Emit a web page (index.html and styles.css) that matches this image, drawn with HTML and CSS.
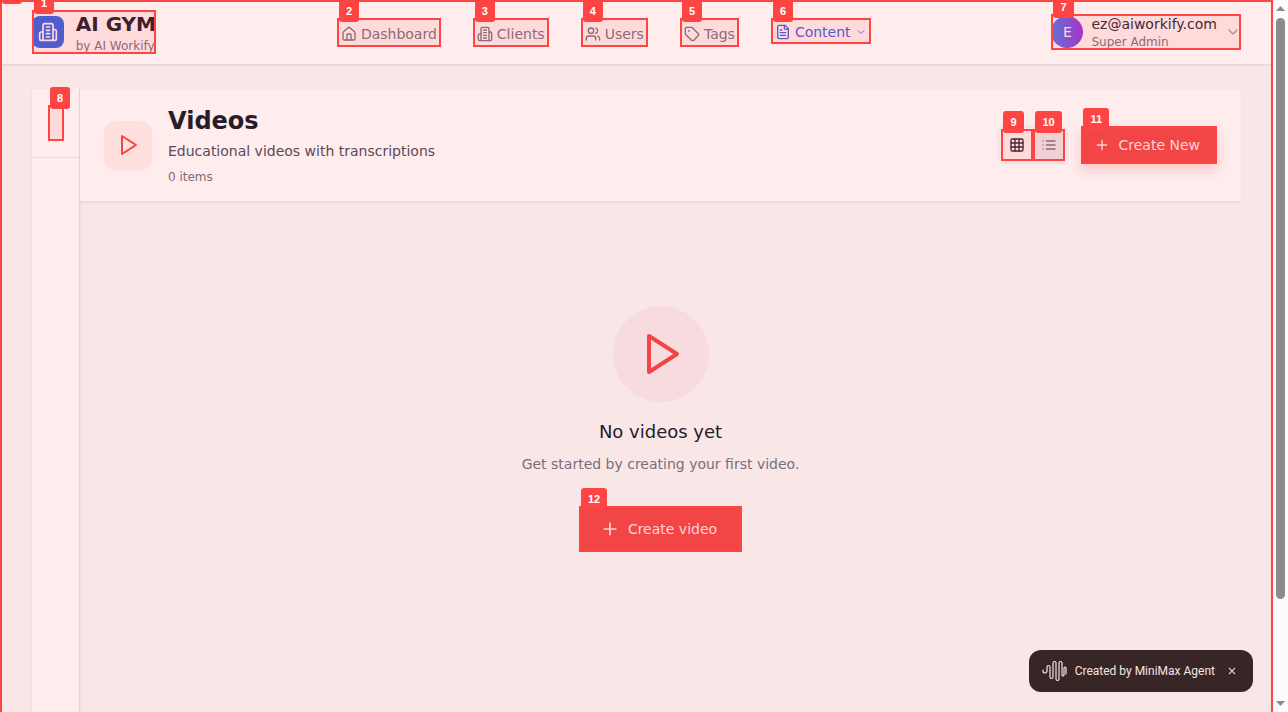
FILE: index.html
```html
<!DOCTYPE html>
<html lang="en">
<head>
<meta charset="utf-8">
<title>AI GYM - Videos</title>
<link rel="stylesheet" href="styles.css">
</head>
<body>
<svg class="sprite" aria-hidden="true">
  <symbol id="building" viewBox="0 0 24 24"><path d="M6 22V4a2 2 0 0 1 2-2h8a2 2 0 0 1 2 2v18Z"/><path d="M6 12H4a2 2 0 0 0-2 2v6a2 2 0 0 0 2 2h2M18 9h2a2 2 0 0 1 2 2v9a2 2 0 0 1-2 2h-2M10 6h4M10 10h4M10 14h4M10 18h4"/></symbol>
  <symbol id="home" viewBox="0 0 24 24"><path d="M15 21v-8a1 1 0 0 0-1-1h-4a1 1 0 0 0-1 1v8"/><path d="M3 10a2 2 0 0 1 .7-1.5l7-6a2 2 0 0 1 2.600 0l7 6A2 2 0 0 1 21 10v9a2 2 0 0 1-2 2H5a2 2 0 0 1-2-2z"/></symbol>
  <symbol id="users" viewBox="0 0 24 24"><path d="M16 21v-2a4 4 0 0 0-4-4H6a4 4 0 0 0-4 4v2"/><circle cx="9" cy="7" r="4"/><path d="M22 21v-2a4 4 0 0 0-3-3.870M16 3.130a4 4 0 0 1 0 7.750"/></symbol>
  <symbol id="tag" viewBox="0 0 24 24"><path d="M12.600 2.600A2 2 0 0 0 11.200 2H4a2 2 0 0 0-2 2v7.200a2 2 0 0 0 .6 1.400l8.700 8.700a2.400 2.400 0 0 0 3.400 0l6.600-6.600a2.400 2.400 0 0 0 0-3.400z"/><circle cx="7.500" cy="7.500" r=".5"/></symbol>
  <symbol id="file" viewBox="0 0 24 24"><path d="M15 2H6a2 2 0 0 0-2 2v16a2 2 0 0 0 2 2h12a2 2 0 0 0 2-2V7Z"/><path d="M14 2v4a2 2 0 0 0 2 2h4M10 9H8M16 13H8M16 17H8"/></symbol>
  <symbol id="chevron" viewBox="0 0 24 24"><path d="m6 9 6 6 6-6"/></symbol>
  <symbol id="play" viewBox="0 0 24 24"><path d="M6 3l14 9-14 9z"/></symbol>
  <symbol id="grid" viewBox="0 0 24 24"><rect x="3" y="3" width="18" height="18" rx="2"/><path d="M3 9h18M3 15h18M9 3v18M15 3v18"/></symbol>
  <symbol id="list" viewBox="0 0 24 24"><path d="M3 6h.01M3 12h.01M3 18h.01M8 6h13M8 12h13M8 18h13"/></symbol>
  <symbol id="plus" viewBox="0 0 24 24"><path d="M5 12h14M12 5v14"/></symbol>
</svg>
<div class="page">
  <span class="badge">0</span>
  <header class="topbar">
    <a class="brand mark" href="#">
      <span class="badge">1</span>
      <span class="brand-logo"><svg class="icon icon-20"><use href="#building"/></svg></span>
      <span class="brand-text"><strong class="brand-name">AI GYM</strong><span class="caption">by AI Workify</span></span>
    </a>
    <nav class="nav">
      <a class="nav-item mark" href="#"><span class="badge">2</span><svg class="icon"><use href="#home"/></svg>Dashboard</a>
      <a class="nav-item mark" href="#"><span class="badge">3</span><svg class="icon"><use href="#building"/></svg>Clients</a>
      <a class="nav-item mark" href="#"><span class="badge">4</span><svg class="icon"><use href="#users"/></svg>Users</a>
      <a class="nav-item mark" href="#"><span class="badge">5</span><svg class="icon"><use href="#tag"/></svg>Tags</a>
      <button class="nav-item nav-active mark" type="button"><span class="badge">6</span><svg class="icon"><use href="#file"/></svg>Content<svg class="icon icon-12 soft"><use href="#chevron"/></svg></button>
    </nav>
    <button class="account mark" type="button">
      <span class="badge">7</span>
      <span class="avatar">E</span>
      <span class="account-text"><span class="email">ez@aiworkify.com</span><span class="caption">Super Admin</span></span>
      <svg class="icon muted"><use href="#chevron"/></svg>
    </button>
  </header>

  <div class="workspace">
    <aside class="sidebar">
      <div class="sidebar-head"><button class="collapse mark" type="button" aria-label="Toggle sidebar"><span class="badge">8</span></button></div>
    </aside>
    <main class="content">
      <section class="page-head">
        <span class="head-icon"><svg class="icon icon-24"><use href="#play"/></svg></span>
        <div class="head-text">
          <h1>Videos</h1>
          <p class="subtitle">Educational videos with transcriptions</p>
          <p class="count">0 items</p>
        </div>
        <div class="view-toggle">
          <button class="view-btn selected mark" type="button" aria-label="Grid view"><span class="badge">9</span><svg class="icon"><use href="#grid"/></svg></button>
          <button class="view-btn mark" type="button" aria-label="List view"><span class="badge">10</span><svg class="icon"><use href="#list"/></svg></button>
        </div>
        <button class="primary raised mark" type="button"><span class="badge">11</span><svg class="icon"><use href="#plus"/></svg>Create New</button>
      </section>
      <section class="empty">
        <span class="empty-icon"><svg class="icon icon-48"><use href="#play"/></svg></span>
        <h2>No videos yet</h2>
        <p>Get started by creating your first video.</p>
        <button class="primary large mark" type="button"><span class="badge">12</span><svg class="icon icon-20"><use href="#plus"/></svg>Create video</button>
      </section>
    </main>
  </div>

  <div class="toast">
    <svg class="toast-logo" viewBox="0 0 25 22"><path d="M1 10v1a2 2 0 0 0 4 0V7a1.500 1.500 0 0 1 3 0v10a1.500 1.500 0 0 0 3 0V3a1.500 1.500 0 0 1 3 0v16a1.500 1.500 0 0 0 3 0V3a1.500 1.500 0 0 1 3 0v12a1 1 0 0 0 2 0V8a1 1 0 0 1 2 0v6"/></svg>
    <span>Created by MiniMax Agent</span>
    <button class="toast-close" type="button" aria-label="Close"><svg viewBox="0 0 8 8"><path d="M1 1l6 6M7 1l-6 6"/></svg></button>
  </div>
</div>
<div class="scrollbar" aria-hidden="true">
  <svg class="arrow" viewBox="0 0 9 5"><path d="M0 5l4.500-5L9 5z"/></svg>
  <div class="track"><div class="thumb"></div></div>
  <svg class="arrow" viewBox="0 0 9 5"><path d="M0 0l4.500 5L9 0z"/></svg>
</div>
</body>
</html>
```
FILE: styles.css
```css
* { box-sizing: border-box; }
body {
  margin: 0;
  height: 100vh;
  display: flex;
  overflow: hidden;
  font: 14px/20px "DejaVu Sans", sans-serif;
  color: #291c2a;
  background: #fcfcfc;
}
h1, h2, p { margin: 0; }
button { font: inherit; border: 0; padding: 0; text-align: left; background: none; cursor: pointer; }
a { color: inherit; text-decoration: none; }
.sprite { position: absolute; width: 0; height: 0; }

.icon {
  width: 16px;
  height: 16px;
  flex: none;
  fill: none;
  stroke: currentColor;
  stroke-width: 2;
  stroke-linecap: round;
  stroke-linejoin: round;
}
.icon-12 { width: 12px; height: 12px; }
.icon-20 { width: 20px; height: 20px; }
.icon-24 { width: 24px; height: 24px; }
.icon-48 { width: 48px; height: 48px; }
.soft { opacity: .8; }
.muted { color: #b08f99; }

.page {
  position: relative;
  flex: 1;
  min-width: 0;
  display: flex;
  flex-direction: column;
  background: #f8e7e6;
}
/* Outline drawn above the page content */
.page::after {
  content: "";
  position: absolute;
  inset: 0;
  border: 2px solid #ff4444;
  border-bottom: 0;
  pointer-events: none;
}
.mark { position: relative; background: #ffdada; }
.mark::after {
  content: "";
  position: absolute;
  inset: 0;
  border: 2px solid #ff4444;
  pointer-events: none;
}
.badge {
  position: absolute;
  z-index: 2;
  left: 2px;
  top: -18px;
  padding: 4px 7px;
  border-radius: 3px;
  background: #ff4444;
  color: #fff;
  font: bold 11px/14px "Liberation Sans", sans-serif;
}

.topbar {
  display: flex;
  align-items: center;
  justify-content: space-between;
  padding: 0 32px;
  min-height: 65px;
  background: #ffecec;
  border-bottom: 1px solid #e8d6dc;
  box-shadow: 0 1px 2px rgba(60, 20, 40, .05);
}
.brand { display: flex; align-items: center; gap: 12px; width: 124px; white-space: nowrap; }
.brand-logo {
  display: grid;
  place-items: center;
  width: 32px;
  height: 32px;
  border-radius: 8px;
  background: #505dce;
  color: #ffd9df;
}
.brand-text, .account-text { display: flex; flex-direction: column; }
.brand-name { font-size: 20px; line-height: 28px; color: #3e202d; }
.caption { font-size: 12px; line-height: 16px; color: #8b6b78; }
.nav { display: flex; align-items: flex-start; gap: 32px; }
.nav-item { display: flex; align-items: center; gap: 4px; padding: 6px 4px 3px; color: #8b6b78; }
.nav-active { padding: 4px 4px 2px; color: #565bca; }
.account { display: flex; align-items: center; gap: 8px; }
.avatar {
  display: grid;
  place-items: center;
  width: 32px;
  height: 32px;
  border-radius: 50%;
  background: linear-gradient(90deg, #6073d8, #a634c4);
  color: #ffd5dc;
}
.email { color: #472735; }

.workspace { flex: 1; display: flex; padding: 24px 32px 0; }
.sidebar { width: 48px; background: #ffecec; border-right: 1px solid #e8d5da; box-shadow: 0 1px 2px rgba(60, 20, 40, .08); }
.sidebar-head { padding: 16px; border-bottom: 1px solid #ead9df; }
.collapse { display: block; width: 16px; height: 36px; }
.content { flex: 1; min-width: 0; }
.page-head {
  display: flex;
  align-items: center;
  padding: 16px 24px;
  background: #ffecec;
  border-bottom: 1px solid #e8d6dc;
  box-shadow: 0 1px 2px rgba(60, 20, 40, .05);
}
.head-icon {
  display: grid;
  place-items: center;
  width: 48px;
  height: 48px;
  margin-right: 16px;
  border-radius: 12px;
  background: #ffdede;
  color: #f24545;
  box-shadow: 0 1px 2px rgba(60, 20, 40, .05);
}
.head-text { flex: 1; }
h1 { font-size: 24px; line-height: 32px; }
.subtitle { margin: 4px 0 8px; color: #5b4958; }
.count { font-size: 12px; line-height: 16px; color: #7a6d7a; }
.view-toggle { display: flex; padding: 4px; margin-right: 12px; border-radius: 8px; background: #f8e5e7; }
.view-btn { display: grid; place-items: center; width: 32px; height: 32px; background: #f2d1d5; color: #8b6b78; }
.selected { background: #ffdada; color: #472735; }
.primary {
  display: flex;
  align-items: center;
  gap: 8px;
  height: 38px;
  padding: 0 17px 0 13px;
  background: #f24545;
  color: #ffd3d3;
}
.raised { box-shadow: 0 6px 12px rgba(242, 69, 69, .22); }
.large { height: 46px; padding: 0 25px 0 21px; margin-top: 32px; }

.empty { display: flex; flex-direction: column; align-items: center; padding-top: 104px; }
.empty-icon {
  display: grid;
  place-items: center;
  width: 96px;
  height: 96px;
  border-radius: 50%;
  background: #f7dbde;
  color: #f24545;
}
h2 { margin: 16px 0 8px; font-size: 18px; line-height: 28px; font-weight: 400; }
.empty p { color: #7a6d7a; }

.toast {
  position: absolute;
  right: 20px;
  bottom: 20px;
  display: flex;
  align-items: center;
  gap: 8px;
  height: 42px;
  padding: 0 17px 0 13px;
  border-radius: 12px;
  background: #382626;
  color: #f7e3e3;
  font: 400 12px/16px Roboto, sans-serif;
}
.toast-logo { width: 25px; height: 22px; fill: none; stroke: currentColor; stroke-width: 1.2; stroke-linecap: round; }
.toast-close { width: 8px; height: 8px; margin-left: 5px; color: #d8c4c4; }
.toast-close svg { display: block; width: 8px; height: 8px; stroke: currentColor; stroke-width: 1.2; }

.scrollbar { width: 15px; padding: 6px 3px; display: flex; flex-direction: column; align-items: center; }
.arrow { width: 9px; height: 5px; fill: #8b8b8b; }
.track { flex: 1; width: 9px; padding: 7px 0; }
.thumb { height: 86%; border-radius: 5px; background: #8b8b8b; }
```
